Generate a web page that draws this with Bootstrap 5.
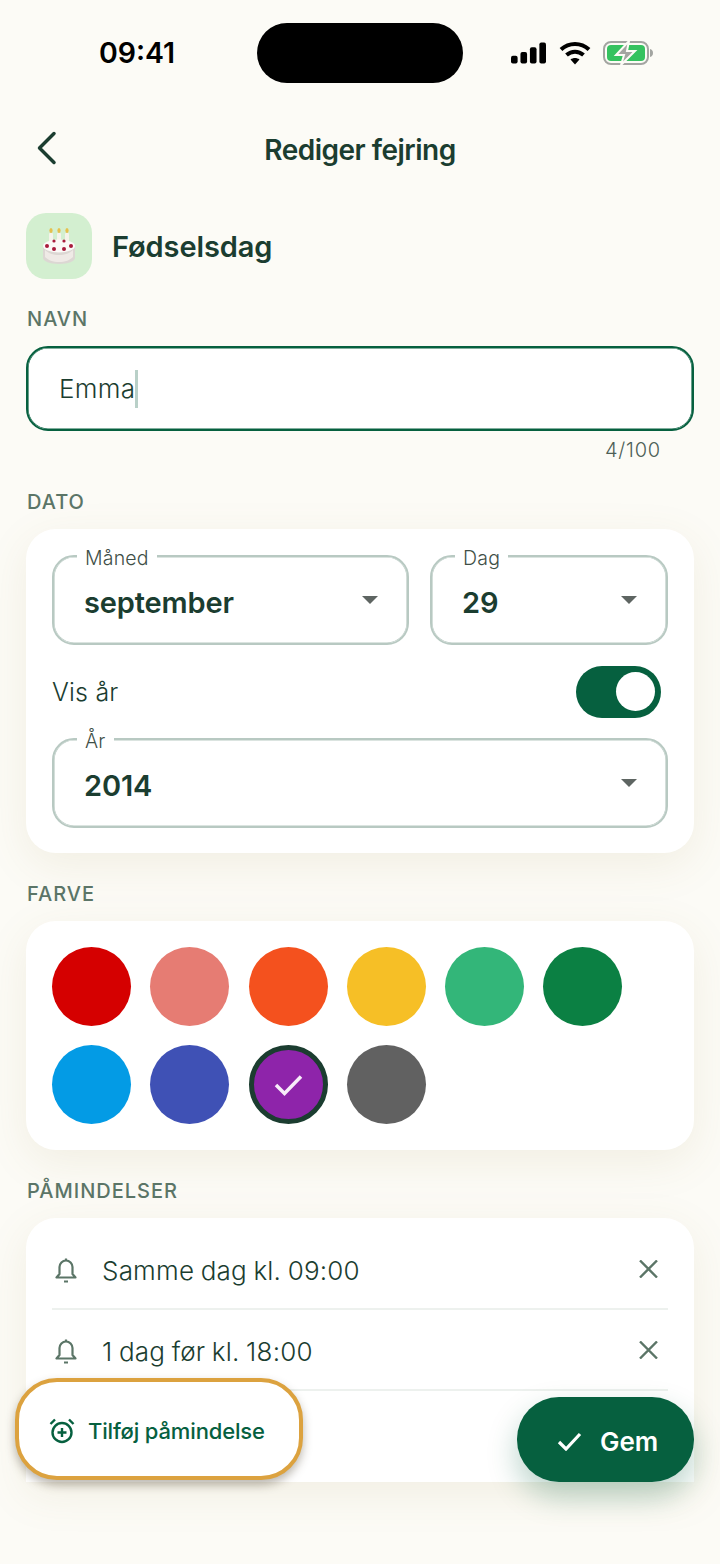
<!DOCTYPE html>
<html lang="da">
<head>
<meta charset="utf-8">
<title>Rediger fejring</title>
<link href="https://cdn.jsdelivr.net/npm/bootstrap@5.3.0/dist/css/bootstrap.min.css" rel="stylesheet">
<style>
html,body{margin:0;height:1564px;overflow:hidden}
body{background:#fcfbf6;color:#1b3d30;font-family:"Inter","Liberation Sans",sans-serif}
.app-shell{position:relative;width:720px;height:1564px;overflow:hidden;padding:0 26px}
.status-row{height:106px;margin:0 -26px;padding:23px 67px 0 72px}
.clock{width:130px;font-size:28.500px;font-weight:600;color:#000;text-align:center;line-height:60px}
.island{width:206px;height:60px;border-radius:30px;background:#000;margin-left:55px}
.status-icons{margin-left:auto;height:60px;gap:12.500px}
.title-row{height:88px;position:relative}
.back-btn{position:absolute;left:10px;top:24.500px;line-height:0}
.page-title{font-size:28px;font-weight:600;letter-spacing:-.5px;color:#1b3d30;margin:0;line-height:88px;text-align:center;width:100%}
.type-row{height:66px;margin-top:19px;gap:20px}
.type-tile{width:66px;height:66px;border-radius:20px;background:#d3efd0}
.type-name{font-size:29px;font-weight:600;letter-spacing:-.1px;margin:0;padding-top:2px;color:#1b3d30}
.sec-label{font-size:20px;font-weight:500;letter-spacing:1px;color:#5b7567;line-height:24px;margin:0 0 0 1px}
.label-navn{margin-top:28px}
.label-dato{margin-top:28px}
.label-farve{margin-top:29px}
.label-rem{margin-top:29px}
.name-box{height:85px;margin-top:15px;border:2px solid #06603f;box-shadow:inset 0 0 0 .6px #06603f;border-radius:22px;background:#fff;padding-left:31px;font-size:26px;font-weight:300;letter-spacing:.3px;color:#1b3d30}
.caret-line{display:inline-block;width:3px;height:38px;background:#b9d0c8}
.counter{text-align:right;font-size:20px;font-weight:300;letter-spacing:.8px;color:#4d5f56;padding-right:33px;line-height:24px;margin-top:7px}
.panel{background:#fff;border-radius:30px;box-shadow:0 12px 44px rgba(150,130,60,.1)}
.date-panel{height:324px;margin-top:15px;padding:26px}
.outline-field{position:relative;height:90px;border:2px solid #b8c9c2;box-shadow:inset 0 0 0 .6px #b8c9c2;border-radius:22px;padding:5px 30px 0;font-size:29px;font-weight:600;letter-spacing:-.15px;color:#1b3d30}
.float-tag{position:absolute;top:-11px;left:23px;background:#fff;padding:0 8px;font-size:19.500px;font-weight:300;line-height:24px;color:#3f4f47;letter-spacing:.2px}
.drop-tri{width:0;height:0;border-left:8.500px solid transparent;border-right:8.500px solid transparent;border-top:8.500px solid #5e6562;margin:-5px -1px 0 auto}
.field-month{width:357px}
.field-day{width:238px}
.year-line{height:93px;padding:0 7px 0 0;font-size:25px;font-weight:300;letter-spacing:.2px}
.year-text{padding-top:2px}
.toggle-track{width:85px;height:52px;border-radius:26px;background:#06603f;position:relative}
.toggle-knob{position:absolute;right:6px;top:6.500px;width:39px;height:39px;border-radius:50%;background:#fff}
.color-panel{height:229px;margin-top:15px;padding:26px;display:grid;grid-template-columns:repeat(6,79px);gap:19px 19.250px;grid-auto-rows:79px}
.swatch{width:79px;height:79px;border-radius:50%}
.swatch-on{border:5px solid #1b3d30}
.sw-red{background:#d50000}.sw-salmon{background:#e67c73}.sw-orange{background:#f4511e}.sw-yellow{background:#f6bf26}.sw-mint{background:#33b679}.sw-green{background:#0b8043}.sw-blue{background:#039be5}.sw-indigo{background:#3f51b5}.sw-purple{background:#8e24aa}.sw-grey{background:#616161}
.rem-panel{height:264px;margin-top:15px;padding:12px 26px 0;border-radius:30px 30px 0 0;position:relative}
.rem-row{height:80px;border-bottom:2px solid #edf1ee;gap:25px;padding:3px 0 0 3px;font-size:26px;font-weight:300;letter-spacing:.2px;word-spacing:-1px}
.rem-row+.rem-row{height:81px}
.x-mark{margin:-3px 10px 0 auto;line-height:0}
.add-pill{position:absolute;left:15px;top:1378px;width:288px;height:102px;border-radius:42px;border:4px solid #dca23f;background:#fff;box-shadow:0 5px 10px rgba(60,50,30,.35);color:#06603f;font-size:22px;font-weight:500;letter-spacing:-.15px;gap:13px;padding:4px 0 0 30px}
.save-fab{position:absolute;left:517px;top:1397px;width:177px;height:85px;border-radius:42px;background:#06603f;box-shadow:0 14px 30px rgba(6,96,63,.28);color:#fff;font-size:26px;font-weight:600;gap:18px;padding:4px 0 0 40px}
</style>
</head>
<body>
<div class="app-shell">
  <div class="status-row d-flex align-items-start">
    <div class="clock">09:41</div>
    <div class="island"></div>
    <div class="status-icons d-flex align-items-center">
      <svg width="35" height="22" viewBox="0 0 37 22"><rect x="0" y="14" width="7" height="8" rx="2"/><rect x="10" y="10" width="7" height="12" rx="2"/><rect x="20" y="5" width="7" height="17" rx="2"/><rect x="30" y="0" width="7" height="22" rx="2"/></svg>
      <svg width="32" height="24" viewBox="0 0 32 24" fill="none" stroke="#000" stroke-width="4"><path d="M2 8.500C10 1 22 1 30 8.500"/><path d="M7.500 14C12.500 9.500 19.500 9.500 24.500 14"/><path d="M16 23.500 11.500 18.500C14 16.500 18 16.500 20.500 18.500Z" fill="#000" stroke="none"/></svg>
      <svg width="50" height="24" viewBox="0 0 50 24"><rect x="1" y="1" width="44" height="22" rx="7" fill="none" stroke="#a3a5a1" stroke-width="2"/><rect x="4" y="4" width="38" height="16" rx="4" fill="#35c25f"/><path d="M47 8c2 .5 3 2 3 4s-1 3.500-3 4z" fill="#a3a5a1"/><path d="M26 0 13 14h8l-3 10 14-14h-8z" fill="#a3a5a1" stroke="#fcfbf6" stroke-width="2"/></svg>
    </div>
  </div>
  <div class="title-row">
    <span class="back-btn"><svg width="22" height="34" viewBox="0 0 22 34" fill="none" stroke="#1b3d30" stroke-width="3.500" stroke-linecap="round" stroke-linejoin="round"><path d="M18 2.500 3.500 17 18 31.500"/></svg></span>
    <h1 class="page-title">Rediger fejring</h1>
  </div>
  <div class="type-row d-flex align-items-center">
    <div class="type-tile d-flex align-items-center justify-content-center">
      <svg width="36" height="36" viewBox="0 0 36 36"><g fill="#f6f3ea"><rect x="8" y="5" width="4" height="14" rx="1"/><rect x="16" y="5" width="4" height="14" rx="1"/><rect x="24" y="5" width="4" height="14" rx="1"/></g><g fill="#e6c04c"><ellipse cx="10" cy="2.500" rx="1.600" ry="2.500"/><ellipse cx="18" cy="2.500" rx="1.600" ry="2.500"/><ellipse cx="26" cy="2.500" rx="1.600" ry="2.500"/></g><path d="M2 18c0-3 7-5 16-5s16 2 16 5v12c0 3-7 6-16 6S2 33 2 30z" fill="#dcd7d3"/><ellipse cx="18" cy="18" rx="16" ry="6.500" fill="#fbf9f7"/><path d="M4 22c3 3 8 5 14 5s11-2 14-5v7c-3 3-8 5-14 5S7 32 4 29z" fill="#efeae6"/><g fill="#a81b3c"><circle cx="6" cy="18" r="2"/><circle cx="13" cy="21" r="2"/><circle cx="23" cy="21" r="2"/><circle cx="30" cy="18" r="2"/><circle cx="13" cy="13" r="1.600"/><circle cx="23" cy="13" r="1.600"/></g></svg>
    </div>
    <h2 class="type-name">Fødselsdag</h2>
  </div>
  <p class="sec-label label-navn">NAVN</p>
  <div class="name-box d-flex align-items-center">Emma<span class="caret-line"></span></div>
  <div class="counter">4/100</div>
  <p class="sec-label label-dato">DATO</p>
  <div class="panel date-panel">
    <div class="d-flex justify-content-between">
      <div class="outline-field field-month d-flex align-items-center"><span class="float-tag">Måned</span>september<span class="drop-tri"></span></div>
      <div class="outline-field field-day d-flex align-items-center"><span class="float-tag">Dag</span>29<span class="drop-tri"></span></div>
    </div>
    <div class="year-line d-flex align-items-center justify-content-between"><span class="year-text">Vis år</span><span class="toggle-track"><span class="toggle-knob"></span></span></div>
    <div class="outline-field d-flex align-items-center"><span class="float-tag">År</span>2014<span class="drop-tri"></span></div>
  </div>
  <p class="sec-label label-farve">FARVE</p>
  <div class="panel color-panel">
    <div class="swatch sw-red"></div>
    <div class="swatch sw-salmon"></div>
    <div class="swatch sw-orange"></div>
    <div class="swatch sw-yellow"></div>
    <div class="swatch sw-mint"></div>
    <div class="swatch sw-green"></div>
    <div class="swatch sw-blue"></div>
    <div class="swatch sw-indigo"></div>
    <div class="swatch swatch-on sw-purple d-flex align-items-center justify-content-center"><svg width="30" height="22" viewBox="0 0 30 22" fill="none" stroke="#f7ecf9" stroke-width="3.500"><path d="M3 11l8.500 8.500L28 2.500"/></svg></div>
    <div class="swatch sw-grey"></div>
  </div>
  <p class="sec-label label-rem">PÅMINDELSER</p>
  <div class="panel rem-panel">
    <div class="rem-row d-flex align-items-center">
      <svg width="22" height="25" viewBox="0 0 22 25" fill="none" stroke="#5b7567" stroke-width="2.200"><path d="M1.500 19.500h19l-3-3.500V9a6.500 6.500 0 0 0-13 0v7z" stroke-linejoin="round"/><path d="M11 .5v2M9 23.500h4"/></svg>
      <span>Samme dag kl. 09:00</span>
      <span class="x-mark"><svg width="19" height="18" viewBox="0 0 19 18" stroke="#5b7567" stroke-width="2.400"><path d="M1 .5l17 17M18 .5 1 17.500"/></svg></span>
    </div>
    <div class="rem-row d-flex align-items-center">
      <svg width="22" height="25" viewBox="0 0 22 25" fill="none" stroke="#5b7567" stroke-width="2.200"><path d="M1.500 19.500h19l-3-3.500V9a6.500 6.500 0 0 0-13 0v7z" stroke-linejoin="round"/><path d="M11 .5v2M9 23.500h4"/></svg>
      <span>1 dag før kl. 18:00</span>
      <span class="x-mark"><svg width="19" height="18" viewBox="0 0 19 18" stroke="#5b7567" stroke-width="2.400"><path d="M1 .5l17 17M18 .5 1 17.500"/></svg></span>
    </div>
  </div>
  <div class="add-pill d-flex align-items-center">
    <svg width="26" height="26" viewBox="0 0 26 26" fill="none" stroke="#06603f" stroke-width="2.400"><circle cx="13" cy="14.500" r="9.500"/><path d="M13 10v9M8.500 14.500h9M1.500 6 6 1.500M24.500 6 20 1.500"/></svg>
    <span>Tilføj påmindelse</span>
  </div>
  <div class="save-fab d-flex align-items-center">
    <svg width="25" height="19" viewBox="0 0 25 19" fill="none" stroke="#fff" stroke-width="3.200"><path d="M2 10l7 7L23 2"/></svg>
    <span>Gem</span>
  </div>
</div>
<script src="https://cdn.jsdelivr.net/npm/bootstrap@5.3.0/dist/js/bootstrap.bundle.min.js"></script>
</body>
</html>
